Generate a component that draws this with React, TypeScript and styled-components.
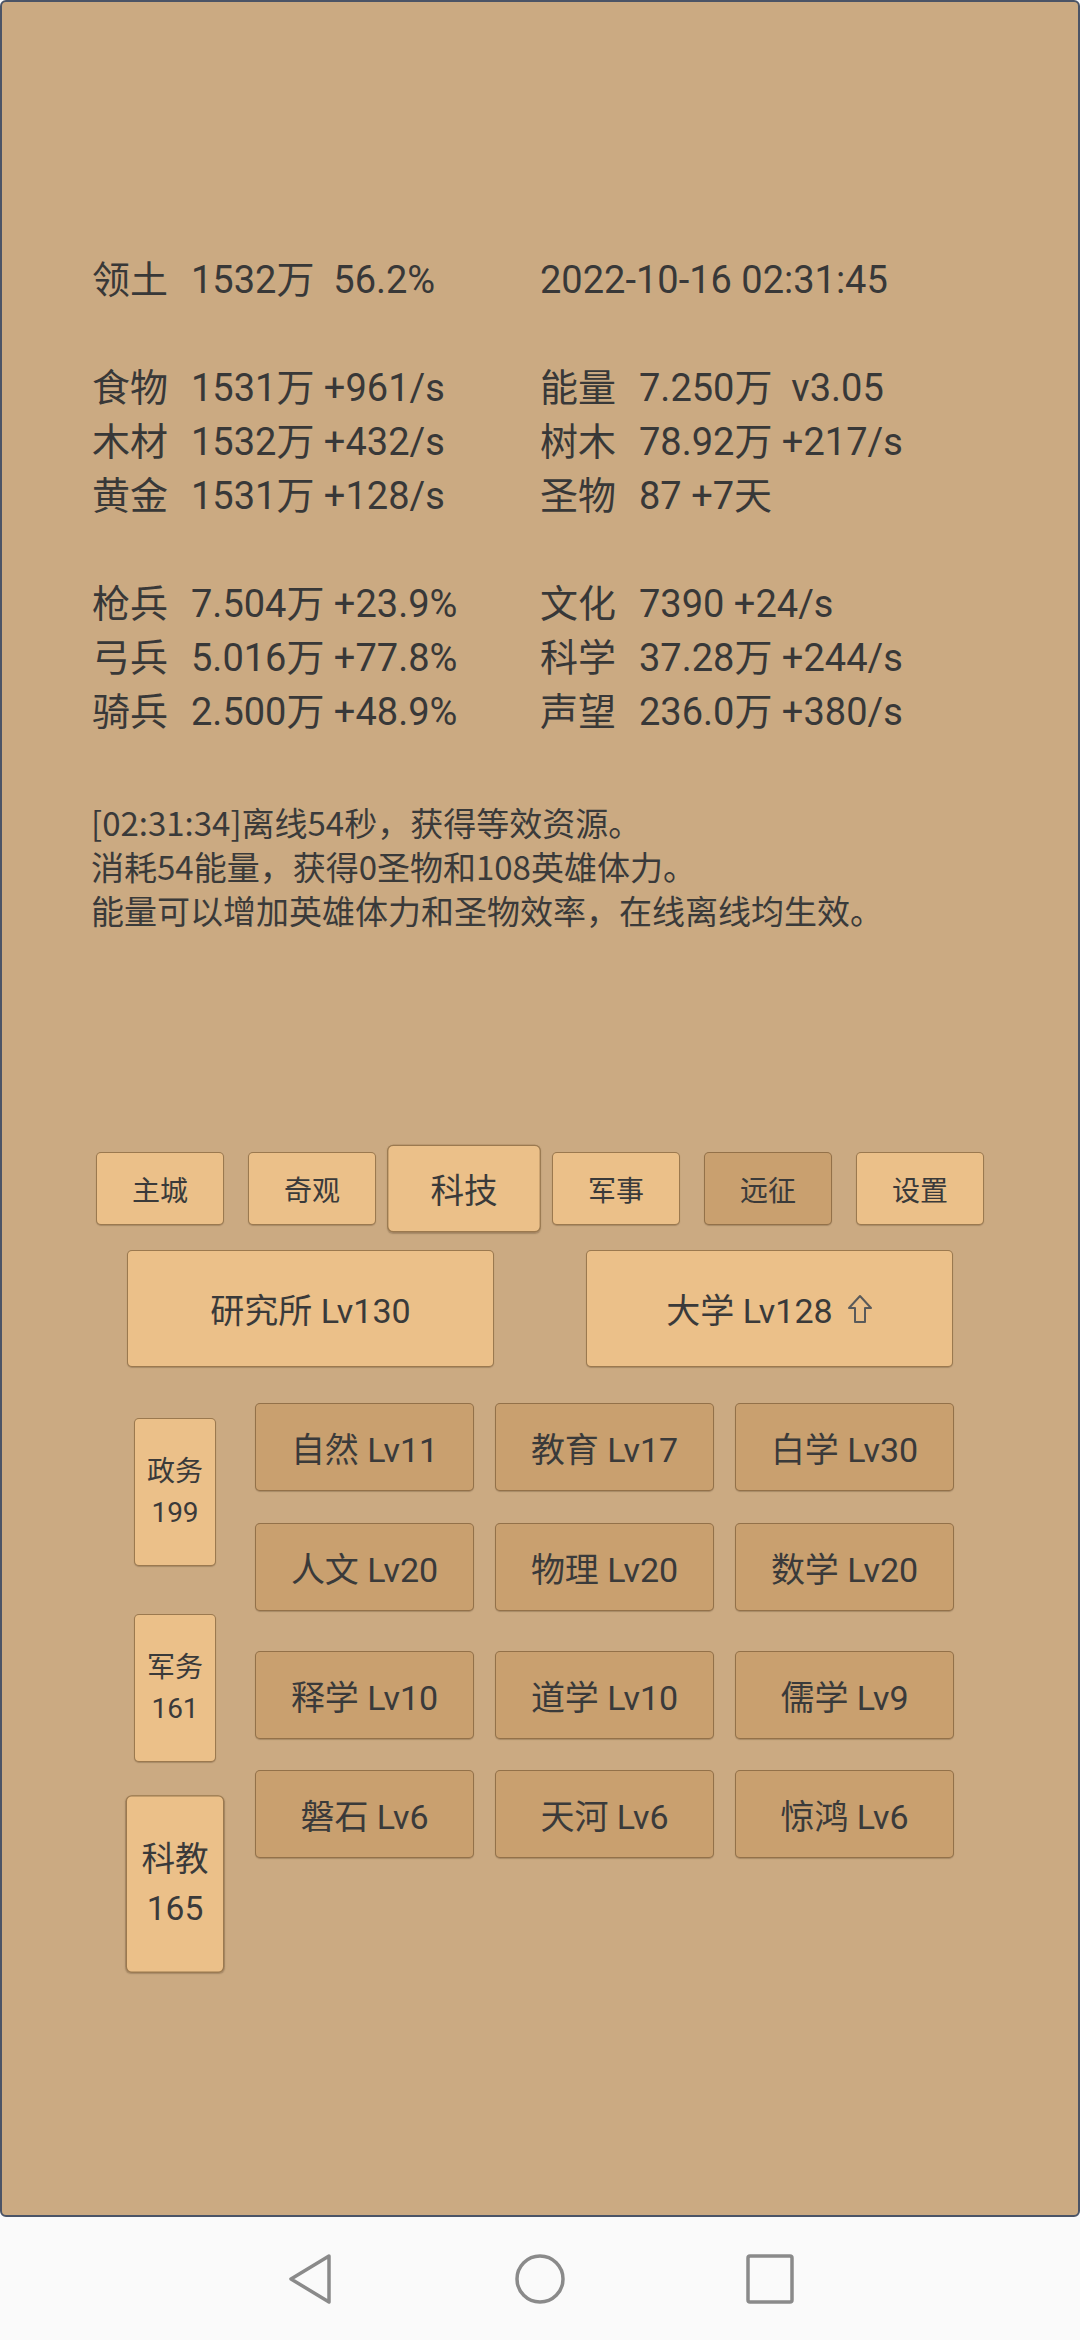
import React from "react";
import styled, { createGlobalStyle } from "styled-components";

const GlobalStyle = createGlobalStyle`
  html, body {
    margin: 0;
    padding: 0;
    background: #fafafa;
  }
  #root {
    width: 1080px;
    height: 2340px;
  }
`;

const Screen = styled.div`
  width: 1080px;
  height: 2340px;
  display: flex;
  flex-direction: column;
  font-family: Roboto, "Noto Sans CJK SC", sans-serif;
  color: #383838;
`;

const Panel = styled.main`
  box-sizing: border-box;
  height: 2217px;
  background: #cbaa82;
  border: 2px solid #4b5466;
  border-radius: 6px;
  display: flex;
  flex-direction: column;
  padding-top: 251px;
`;

const Stats = styled.section`
  display: grid;
  grid-template-columns: 448px 1fr;
  padding-left: 90px;
  font-size: 38px;
`;

const StatLine = styled.div`
  height: 54px;
  line-height: 54px;
  white-space: pre;
`;

const Label = styled.span`
  display: inline-block;
  width: 99px;
`;

const Message = styled.p`
  margin: 61px 0 0;
  padding-left: 89px;
  font-family: "Noto Sans CJK SC", sans-serif;
  font-size: 33px;
  line-height: 44px;
  color: #3a3a3a;
`;

const Tabs = styled.nav`
  margin-top: 220px;
  display: flex;
  justify-content: center;
  gap: 24px;
`;

const Btn = styled.button<{ $dark?: boolean; $active?: boolean }>`
  box-sizing: border-box;
  margin: 0;
  padding: 0;
  display: flex;
  align-items: center;
  justify-content: center;
  background: ${({ $dark }) => ($dark ? "#c9a06f" : "#ebc089")};
  border: 1.5px solid rgba(128, 98, 60, 0.75);
  border-radius: 5px;
  box-shadow: 0 1px 1px rgba(60, 40, 20, 0.25);
  color: #3a3a3a;
  font-family: Roboto, "Noto Sans CJK SC", sans-serif;
  transform: ${({ $active }) => ($active ? "scale(1.2)" : "none")};
`;

const TabButton = styled(Btn)`
  width: 128px;
  height: 73px;
  font-size: 28px;
`;

const Buildings = styled.div`
  margin-top: 25px;
  display: flex;
  justify-content: center;
  gap: 92px;
`;

const BuildingButton = styled(Btn)`
  width: 367px;
  height: 117px;
  font-size: 34px;
  gap: 14px;
`;

const Lower = styled.div`
  margin-top: 36px;
  display: flex;
  padding-left: 132px;
  gap: 39px;
`;

const SideColumn = styled.div`
  width: 82px;
  margin-top: 15px;
  display: flex;
  flex-direction: column;
  gap: 48px;
`;

const SideButton = styled(Btn)`
  width: 82px;
  height: 148px;
  flex-direction: column;
  font-size: 28px;
  line-height: 41px;
`;

const TechGrid = styled.div`
  display: flex;
  flex-direction: column;
`;

const TechRow = styled.div<{ $top: number }>`
  display: flex;
  gap: 21px;
  margin-top: ${({ $top }) => $top}px;
`;

const TechButton = styled(Btn)`
  width: 219px;
  height: 88px;
  font-size: 34px;
`;

const NavBar = styled.footer`
  flex: 1;
  display: flex;
  align-items: center;
  justify-content: center;
  gap: 170px;
  background: #fafafa;
`;

const NavIcon = styled.svg`
  width: 60px;
  height: 60px;
  fill: none;
  stroke: #8a8a8a;
  stroke-width: 3.5;
  stroke-linejoin: round;
`;

const UpArrow = () => (
  <svg width="26" height="30" viewBox="0 0 26 30" fill="none" stroke="#5a5a5a" strokeWidth="2" strokeLinejoin="round">
    <path d="M13 2 L24 14 H18 V28 H8 V14 H2 Z" />
  </svg>
);

type Stat = { label?: string; text: string } | null;

const rows: [Stat, Stat][] = [
  [{ label: "领土", text: "1532万  56.2%" }, { text: "2022-10-16 02:31:45" }],
  [null, null],
  [{ label: "食物", text: "1531万 +961/s" }, { label: "能量", text: "7.250万  v3.05" }],
  [{ label: "木材", text: "1532万 +432/s" }, { label: "树木", text: "78.92万 +217/s" }],
  [{ label: "黄金", text: "1531万 +128/s" }, { label: "圣物", text: "87 +7天" }],
  [null, null],
  [{ label: "枪兵", text: "7.504万 +23.9%" }, { label: "文化", text: "7390 +24/s" }],
  [{ label: "弓兵", text: "5.016万 +77.8%" }, { label: "科学", text: "37.28万 +244/s" }],
  [{ label: "骑兵", text: "2.500万 +48.9%" }, { label: "声望", text: "236.0万 +380/s" }],
];

const tabs = [
  { name: "主城" },
  { name: "奇观" },
  { name: "科技", active: true },
  { name: "军事" },
  { name: "远征", dark: true },
  { name: "设置" },
];

const sides = [
  { name: "政务", value: 199 },
  { name: "军务", value: 161 },
  { name: "科教", value: 165, active: true },
];

const techRows = [
  { top: 0, items: ["自然 Lv11", "教育 Lv17", "白学 Lv30"] },
  { top: 32, items: ["人文 Lv20", "物理 Lv20", "数学 Lv20"] },
  { top: 40, items: ["释学 Lv10", "道学 Lv10", "儒学 Lv9"] },
  { top: 31, items: ["磐石 Lv6", "天河 Lv6", "惊鸿 Lv6"] },
];

function StatCell({ stat }: { stat: Stat }) {
  if (!stat) return <StatLine />;
  return (
    <StatLine>
      {stat.label && <Label>{stat.label}</Label>}
      {stat.text}
    </StatLine>
  );
}

export default function App() {
  return (
    <Screen>
      <GlobalStyle />
      <Panel>
        <Stats>
          {rows.map(([left, right], i) => (
            <React.Fragment key={i}>
              <StatCell stat={left} />
              <StatCell stat={right} />
            </React.Fragment>
          ))}
        </Stats>

        <Message>
          [02:31:34]离线54秒，获得等效资源。
          <br />
          消耗54能量，获得0圣物和108英雄体力。
          <br />
          能量可以增加英雄体力和圣物效率，在线离线均生效。
        </Message>

        <Tabs>
          {tabs.map((t) => (
            <TabButton key={t.name} $active={t.active} $dark={t.dark}>
              {t.name}
            </TabButton>
          ))}
        </Tabs>

        <Buildings>
          <BuildingButton>研究所 Lv130</BuildingButton>
          <BuildingButton>
            <span>大学 Lv128</span>
            <UpArrow />
          </BuildingButton>
        </Buildings>

        <Lower>
          <SideColumn>
            {sides.map((s) => (
              <SideButton key={s.name} $active={s.active}>
                <span>{s.name}</span>
                <span>{s.value}</span>
              </SideButton>
            ))}
          </SideColumn>
          <TechGrid>
            {techRows.map((row, i) => (
              <TechRow key={i} $top={row.top}>
                {row.items.map((item) => (
                  <TechButton key={item} $dark>
                    {item}
                  </TechButton>
                ))}
              </TechRow>
            ))}
          </TechGrid>
        </Lower>
      </Panel>

      <NavBar>
        <NavIcon viewBox="0 0 60 60">
          <path d="M49 7 L11 30 L49 53 Z" />
        </NavIcon>
        <NavIcon viewBox="0 0 60 60">
          <circle cx="30" cy="30" r="23" />
        </NavIcon>
        <NavIcon viewBox="0 0 60 60">
          <rect x="8" y="7" width="44" height="46" rx="2" />
        </NavIcon>
      </NavBar>
    </Screen>
  );
}
